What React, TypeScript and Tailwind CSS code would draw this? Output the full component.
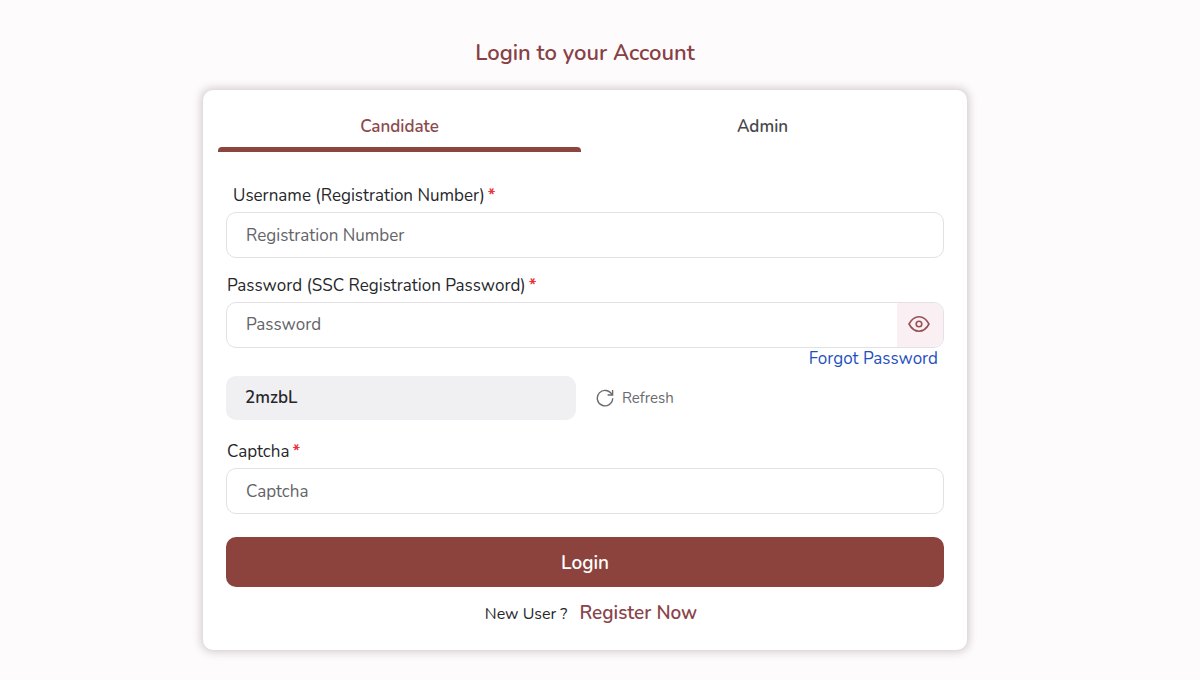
import { useState } from "react";

type Tab = "candidate" | "admin";

const tabs: { id: Tab; label: string }[] = [
  { id: "candidate", label: "Candidate" },
  { id: "admin", label: "Admin" },
];

const inputClass =
  "h-[46px] w-full rounded-[10px] border border-[#e4e1e5] bg-white px-[19px] text-[17px] leading-6 text-[#212529] placeholder-[#636468] outline-none";

function Required() {
  return <span className="ml-[3px] font-bold text-[#e8323c]">*</span>;
}

function EyeIcon() {
  return (
    <svg width="22" height="18" viewBox="0 0 22 18" fill="none" stroke="#965054" strokeWidth="1.6">
      <path d="M1 9C3.6 4.2 7 1.8 11 1.8S18.4 4.2 21 9c-2.6 4.8-6 7.2-10 7.2S3.6 13.8 1 9Z" strokeLinejoin="round" />
      <circle cx="11" cy="9" r="2.8" />
    </svg>
  );
}

function RefreshIcon() {
  return (
    <svg width="18" height="18" viewBox="0 0 18 18" fill="none" stroke="#6a6a6e" strokeWidth="1.4">
      <path d="M15.9 5.7A7.7 7.7 0 1 0 16.7 9.3" />
      <path d="M16.6 1v5h-5" />
    </svg>
  );
}

export default function App() {
  const [tab, setTab] = useState<Tab>("candidate");
  const [username, setUsername] = useState("");
  const [password, setPassword] = useState("");
  const [captcha, setCaptcha] = useState("");
  const [showPassword, setShowPassword] = useState(false);

  return (
    <div className="min-h-screen bg-[#fefbfc] pr-[30px] pb-7 font-[Nunito,Lato,sans-serif] text-[17px] leading-6 text-[#26272b]">
      <main className="mx-auto w-full max-w-[764px] pt-[37px]">
        <h1 className="text-center text-[22px] leading-8 font-semibold text-[#874044]">
          Login to your Account
        </h1>

        {/* LOGIN CARD */}
        <div className="mt-[21px] rounded-[10px] bg-white pb-6 shadow-[0_0_8px_2px_rgba(70,50,60,0.24)]">

          {/* TABS */}
          <div role="tablist" className="mr-[23px] ml-[15px] grid grid-cols-2">
            {tabs.map((t) => (
              <button
                key={t.id}
                type="button"
                role="tab"
                aria-selected={tab === t.id}
                onClick={() => setTab(t.id)}
                className={`pt-[25px] font-semibold ${
                  tab === t.id ? "text-[#8c4a4d]" : "text-[#48484c]"
                }`}
              >
                {t.label}
                <span
                  className={`mt-2 block h-[5px] rounded-t-[4px] ${
                    tab === t.id ? "bg-[#8c443f]" : "bg-transparent"
                  }`}
                />
              </button>
            ))}
          </div>

          {/* FORM */}
          <form className="mt-8 px-[23px]" onSubmit={(e) => e.preventDefault()}>
            <label htmlFor="username" className="mb-1 block pl-[7px]">
              Username (Registration Number)<Required />
            </label>
            <input
              id="username"
              value={username}
              onChange={(e) => setUsername(e.target.value)}
              placeholder="Registration Number"
              className={inputClass}
            />

            <label htmlFor="password" className="mt-4 mb-1 block pl-px">
              Password (SSC Registration Password)<Required />
            </label>
            <div className="flex h-[46px] overflow-hidden rounded-[10px] border border-[#e4e1e5]">
              <input
                id="password"
                type={showPassword ? "text" : "password"}
                value={password}
                onChange={(e) => setPassword(e.target.value)}
                placeholder="Password"
                className="min-w-0 flex-1 px-[19px] text-[#212529] placeholder-[#636468] outline-none"
              />
              <button
                type="button"
                aria-label="Show password"
                onClick={() => setShowPassword(!showPassword)}
                className="flex w-[46px] items-center justify-center bg-[#faf0f3] pr-0.5 pb-0.5"
              >
                <EyeIcon />
              </button>
            </div>
            <div className="flex justify-end pr-1.5 leading-[22px]">
              <a href="#" className="text-[#1f51bd]">
                Forgot Password
              </a>
            </div>

            <div className="mt-1.5 grid grid-cols-2 items-center gap-[18px]">
              <div className="h-11 rounded-[10px] bg-[#f0eff2] px-[19px] py-2.5 font-semibold">
                2mzbL
              </div>
              <button type="button" className="flex w-fit items-center gap-2 pl-0.5 text-[15px] text-[#6a6a6e]">
                <RefreshIcon />
                Refresh
              </button>
            </div>

            <label htmlFor="captcha" className="mt-5 mb-1 block pl-px">
              Captcha<Required />
            </label>
            <input
              id="captcha"
              value={captcha}
              onChange={(e) => setCaptcha(e.target.value)}
              placeholder="Captcha"
              className={inputClass}
            />

            <button
              type="submit"
              className="mt-[23px] h-[50px] w-full rounded-[10px] bg-[#8c433e] pt-px text-[19px] font-semibold text-white"
            >
              Login
            </button>
          </form>

          <p className="mt-3.5 flex items-baseline justify-center gap-3 pl-3 text-[16px] leading-6">
            New User ?
            <a href="#" className="text-[19px] font-semibold text-[#8a444a]">
              Register Now
            </a>
          </p>
        </div>
      </main>
    </div>
  );
}
